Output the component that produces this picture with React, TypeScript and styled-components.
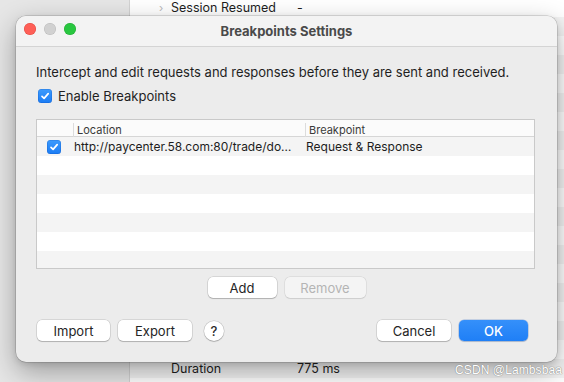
import React from "react";
import styled, { createGlobalStyle } from "styled-components";

const Global = createGlobalStyle`
  html, body { margin: 0; padding: 0; }
  body {
    font-family: Inter, "Noto Sans", "Liberation Sans", sans-serif;
    -webkit-font-smoothing: antialiased;
  }
`;

const Screen = styled.div`
  position: relative;
  width: 564px;
  height: 382px;
  overflow: hidden;
  display: flex;
  background: #ececec;
`;

const Sidebar = styled.div`
  width: 129px;
  flex: none;
  background: #e6e6e6;
  border-right: 1px solid #d2d2d2;
`;

const Main = styled.div`
  flex: 1;
  display: flex;
  flex-direction: column;
  margin-top: -2px;
  background: #fff;
`;

const BgRow = styled.div<{ $alt: boolean }>`
  height: 19px;
  flex: none;
  display: flex;
  align-items: center;
  background: ${(p) => (p.$alt ? "#f4f4f4" : "#ffffff")};
  font-size: 12.5px;
  color: #1e1e1e;
`;

const Chevron = styled.span`
  width: 11px;
  margin-left: 29px;
  color: #b8b8b8;
  font-size: 11px;
`;

const BgLabel = styled.span`
  width: 126px;
  margin-left: 1px;
`;

const BgValue = styled.span``;

const Dialog = styled.div`
  position: absolute;
  left: 16px;
  top: 16px;
  width: 541px;
  height: 346px;
  border-radius: 10px;
  background: #ececec;
  box-shadow: 0 0 0 0.5px rgba(0, 0, 0, 0.22), 0 10px 28px rgba(0, 0, 0, 0.32),
    0 2px 6px rgba(0, 0, 0, 0.12);
  overflow: hidden;
  display: flex;
  flex-direction: column;
`;

const TitleBar = styled.div`
  position: relative;
  height: 30px;
  flex: none;
  background: #f3f3f3;
  border-bottom: 1px solid #d4d4d4;
  display: flex;
  align-items: center;
  justify-content: center;
`;

const Lights = styled.div`
  position: absolute;
  left: 8px;
  top: 7px;
  display: flex;
  gap: 8px;
`;

const Light = styled.span<{ $c: string; $b: string }>`
  width: 12px;
  height: 12px;
  border-radius: 50%;
  background: ${(p) => p.$c};
  box-shadow: inset 0 0 0 0.5px ${(p) => p.$b};
`;

const Title = styled.div`
  font-size: 13px;
  font-weight: 700;
  color: #4a4a4a;
`;

const Body = styled.div`
  flex: 1;
  display: flex;
  flex-direction: column;
  padding: 17px 22px 0 20px;
`;

const Description = styled.div`
  font-size: 13px;
  line-height: 16px;
  color: #1f1f1f;
`;

const CheckRow = styled.label`
  display: flex;
  align-items: center;
  gap: 6px;
  margin-top: 8px;
  margin-left: 2px;
  height: 16px;
  font-size: 13px;
  color: #1f1f1f;
`;

const CheckBox = styled.span`
  width: 14px;
  height: 14px;
  border-radius: 3.5px;
  background: linear-gradient(#3d9bfd, #1b7cf4);
  box-shadow: inset 0 0 0 0.5px rgba(0, 60, 160, 0.35);
  display: flex;
  align-items: center;
  justify-content: center;
  flex: none;
`;

const Table = styled.div`
  margin-top: 15px;
  height: 148px;
  border: 1px solid #c9c9c9;
  background: #fff;
  overflow: hidden;
  display: flex;
  flex-direction: column;
`;

const HeaderRow = styled.div`
  height: 16px;
  flex: none;
  display: grid;
  grid-template-columns: 36px 232px 1fr;
  border-bottom: 1px solid #d6d6d6;
  background: #fbfbfb;
  font-size: 11px;
  color: #3a3a3a;
`;

const HeaderCell = styled.div<{ $sep?: boolean }>`
  display: flex;
  align-items: center;
  padding-left: 3px;
  border-left: ${(p) => (p.$sep ? "1px solid #dcdcdc" : "none")};
  margin: 3px 0 2px;
`;

const DataRow = styled.div<{ $alt: boolean }>`
  height: 19px;
  flex: none;
  display: grid;
  grid-template-columns: 36px 232px 1fr;
  align-items: center;
  background: ${(p) => (p.$alt ? "#f4f4f4" : "#ffffff")};
  font-size: 12px;
  color: #1d1d1d;
`;

const CheckCell = styled.div`
  display: flex;
  padding-left: 10px;
`;

const TextCell = styled.div<{ $pad: number }>`
  padding-left: ${(p) => p.$pad}px;
  white-space: nowrap;
`;

const ButtonRow = styled.div<{ $top: number }>`
  display: flex;
  align-items: center;
  margin-top: ${(p) => p.$top}px;
  gap: 8px;
  padding: 0 7px 0 1px;
`;

const CenterRow = styled(ButtonRow)`
  justify-content: center;
  padding: 0 0 0 2px;
`;

const Spacer = styled.div`
  flex: 1;
`;

const Button = styled.button<{ $w: number; $disabled?: boolean; $primary?: boolean }>`
  width: ${(p) => p.$w}px;
  height: 21px;
  border: none;
  border-radius: 5px;
  padding: 0;
  font-family: inherit;
  font-size: 13px;
  color: ${(p) => (p.$primary ? "#ffffff" : p.$disabled ? "#b4b4b4" : "#252525")};
  font-weight: ${(p) => (p.$primary ? 500 : 400)};
  background: ${(p) =>
    p.$primary ? "linear-gradient(#3590fa, #1f7ff6)" : p.$disabled ? "#f4f4f4" : "#ffffff"};
  box-shadow: ${(p) =>
    p.$primary
      ? "0 0 0 0.5px rgba(0, 70, 180, 0.35), 0 1px 1px rgba(0,0,0,0.12)"
      : p.$disabled
      ? "0 0 0 0.5px rgba(0,0,0,0.1), 0 0.5px 1px rgba(0,0,0,0.08)"
      : "0 0 0 0.5px rgba(0,0,0,0.18), 0 1px 1px rgba(0,0,0,0.18)"};
`;

const HelpButton = styled.button`
  width: 20px;
  height: 20px;
  border-radius: 50%;
  border: none;
  padding: 0;
  margin-left: 4px;
  background: #ffffff;
  box-shadow: 0 0 0 0.5px rgba(0, 0, 0, 0.18), 0 1px 1px rgba(0, 0, 0, 0.18);
  font-family: inherit;
  font-size: 13px;
  font-weight: 500;
  color: #2a2a2a;
  display: flex;
  align-items: center;
  justify-content: center;
`;

const Watermark = styled.div`
  position: absolute;
  right: 2px;
  bottom: 5px;
  font-family: "Liberation Sans", Arial, sans-serif;
  font-size: 12px;
  color: #ffffff;
  text-shadow: 0 0 1px #7a7a7a, 0 0 1px #8a8a8a;
  letter-spacing: 0.1px;
`;

const Check = () => (
  <svg width="10" height="10" viewBox="0 0 10 10">
    <path d="M2 5.3 L4.1 7.4 L8.2 2.6" fill="none" stroke="#fff" strokeWidth="1.7" strokeLinecap="round" strokeLinejoin="round" />
  </svg>
);

const bgRows = Array.from({ length: 21 }, (_, i) => {
  if (i === 0) return { label: "Session Resumed", value: "-", chevron: true };
  if (i === 19) return { label: "Duration", value: "775 ms", chevron: false };
  return { label: "", value: "", chevron: false };
});

export default function App() {
  return (
    <>
      <Global />
      <Screen>
        <Sidebar />
        <Main>
          {bgRows.map((r, i) => (
            <BgRow key={i} $alt={i % 2 === 1}>
              <Chevron>{r.chevron ? "›" : ""}</Chevron>
              <BgLabel>{r.label}</BgLabel>
              <BgValue>{r.value}</BgValue>
            </BgRow>
          ))}
        </Main>

        <Dialog>
          <TitleBar>
            <Lights>
              <Light $c="#fe5f57" $b="rgba(200,40,30,0.5)" />
              <Light $c="#d1d1d1" $b="rgba(0,0,0,0.12)" />
              <Light $c="#29c740" $b="rgba(20,140,30,0.5)" />
            </Lights>
            <Title>Breakpoints Settings</Title>
          </TitleBar>
          <Body>
            <Description>
              Intercept and edit requests and responses before they are sent and received.
            </Description>
            <CheckRow>
              <CheckBox>
                <Check />
              </CheckBox>
              Enable Breakpoints
            </CheckRow>
            <Table>
              <HeaderRow>
                <HeaderCell />
                <HeaderCell $sep>Location</HeaderCell>
                <HeaderCell $sep>Breakpoint</HeaderCell>
              </HeaderRow>
              <DataRow $alt>
                <CheckCell>
                  <CheckBox>
                    <Check />
                  </CheckBox>
                </CheckCell>
                <TextCell $pad={1}>http://paycenter.58.com:80/trade/do…</TextCell>
                <TextCell $pad={1}>Request &amp; Response</TextCell>
              </DataRow>
              {Array.from({ length: 6 }, (_, i) => (
                <DataRow key={i} $alt={i % 2 === 1}>
                  <div />
                  <div />
                  <div />
                </DataRow>
              ))}
            </Table>
            <CenterRow $top={8}>
              <Button $w={69}>Add</Button>
              <Button $w={81} $disabled>
                Remove
              </Button>
            </CenterRow>
            <ButtonRow $top={22}>
              <Button $w={73}>Import</Button>
              <Button $w={74}>Export</Button>
              <HelpButton>?</HelpButton>
              <Spacer />
              <Button $w={74}>Cancel</Button>
              <Button $w={69} $primary>
                OK
              </Button>
            </ButtonRow>
          </Body>
        </Dialog>
        <Watermark>CSDN @Lambsbaa</Watermark>
      </Screen>
    </>
  );
}
